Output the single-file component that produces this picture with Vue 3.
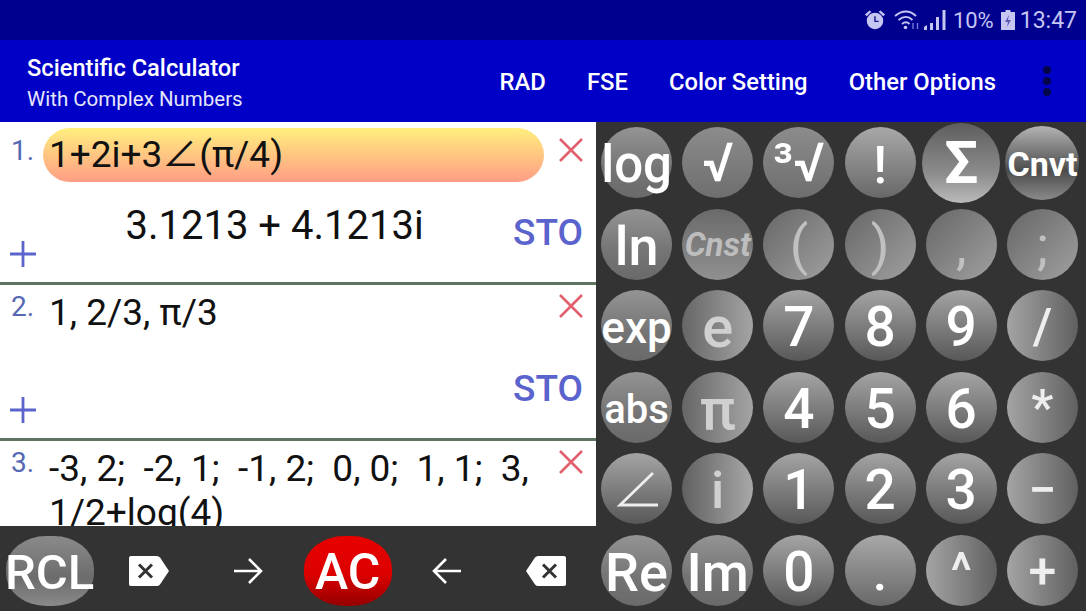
<template>
  <div class="app">
    <div class="status">
      <svg class="st-alarm" viewBox="0 0 24 24" width="22" height="22">
        <circle cx="12" cy="13" r="9" fill="#c6c6f2"/>
        <path d="M1 6l5-4.500 2 1.500-5 5zM23 6l-5-4.500-2 1.500 5 5z" fill="#c6c6f2"/>
        <path d="M12 8v5.500h4" fill="none" stroke="#1a1a90" stroke-width="1.600"/>
      </svg>
      <svg class="st-wifi" viewBox="0 0 27 20" width="27" height="20">
        <path d="M1 6c7-6 15-6 21 0M4.500 10c5-4 10-4 14 0M8 14c3-2.500 5-2.500 7.500 0" fill="none" stroke="#c6c6f2" stroke-width="1.800"/>
        <circle cx="11.500" cy="17.500" r="1.800" fill="#c6c6f2"/>
        <path d="M19 13v6M23.500 19v-6" stroke="#7f7fdc" stroke-width="1.300"/>
      </svg>
      <svg class="st-signal" viewBox="0 0 22 22" width="22" height="22">
        <path d="M0 18l3-2v5H0zM6 14h3v7H6zM12 8h3v13h-3zM18.500 1h3v20h-3z" fill="#c6c6f2"/>
      </svg>
      <span class="st-text pct">10%</span>
      <svg class="st-batt" viewBox="0 0 14 22" width="14" height="22">
        <path d="M4.500 1h5v2H14v18H0V3h4.500z" fill="#c6c6f2"/>
        <path d="M8 6l-4 7h3l-1 5 4-7H7z" fill="#5a5ab8"/>
      </svg>
      <span class="st-text">13:47</span>
    </div>
    <div class="appbar">
      <div class="titles">
        <div class="title">Scientific Calculator</div>
        <div class="subtitle">With Complex Numbers</div>
      </div>
      <div class="menu">
        <span v-for="m in menu" :key="m">{{ m }}</span>
      </div>
      <div class="dots"><i></i><i></i><i></i></div>
    </div>
    <div class="main">
      <div class="left">
        <div class="rows">
          <div v-for="(r, idx) in rows" :key="idx" :class="['row', r.size]">
            <div class="line">
              <span class="idx">{{ idx + 1 }}.</span>
              <div :class="['expr', { active: r.active }]">{{ r.expr }}</div>
              <svg class="close" viewBox="0 0 26 26" width="26" height="26">
                <path d="M2 2l22 22M24 2L2 24" stroke="#e2616f" stroke-width="2.600" fill="none"/>
              </svg>
            </div>
            <div v-if="r.size !== 'cut'" class="line2">
              <svg class="plus" viewBox="0 0 26 26" width="26" height="26">
                <path d="M0 13h26M13 0v26" stroke="#5a64cc" stroke-width="2.800" fill="none"/>
              </svg>
              <div class="result">{{ r.result }}</div>
              <span class="sto">STO</span>
            </div>
          </div>
        </div>
        <div class="bottom">
          <div class="cell"><div class="oval rcl">RCL</div></div>
          <div class="cell">
            <svg viewBox="0 0 42 32" width="42" height="32">
              <path d="M3 1h26c1 0 2 .5 3 1.500L41 16l-9 13.500c-1 1-2 1.500-3 1.500H3c-1.500 0-2-1-2-2V3c0-1 .5-2 2-2z" fill="#fff"/>
              <path d="M11 9.500l13 13M24 9.500l-13 13" stroke="#333" stroke-width="3"/>
            </svg>
          </div>
          <div class="cell">
            <svg viewBox="0 0 30 28" width="30" height="28">
              <path d="M1 14h27M16 2l12 12-12 12" fill="none" stroke="#fff" stroke-width="2.600"/>
            </svg>
          </div>
          <div class="cell"><div class="oval ac">AC</div></div>
          <div class="cell">
            <svg viewBox="0 0 30 28" width="30" height="28">
              <path d="M29 14H2M14 2L2 14l12 12" fill="none" stroke="#fff" stroke-width="2.600"/>
            </svg>
          </div>
          <div class="cell">
            <svg viewBox="0 0 42 32" width="42" height="32">
              <path d="M39 1H13c-1 0-2 .5-3 1.500L1 16l9 13.500c1 1 2 1.500 3 1.500h26c1.500 0 2-1 2-2V3c0-1-.5-2-2-2z" fill="#fff"/>
              <path d="M18 9.500l13 13M31 9.500l-13 13" stroke="#333" stroke-width="3"/>
            </svg>
          </div>
        </div>
      </div>
      <div class="keys">
        <div v-for="k in keys" :key="k.label" class="keycell">
          <div :class="['key', k.cls]">
            <svg v-if="k.label === '∠'" viewBox="0 0 42 38" width="42" height="38">
              <path d="M37 2L4 34h38" fill="none" stroke="#eee" stroke-width="2.800"/>
            </svg>
            <template v-else>{{ k.label }}</template>
          </div>
        </div>
      </div>
    </div>
  </div>
</template>

<script setup>
const menu = ['RAD', 'FSE', 'Color Setting', 'Other Options']

const rows = [
  { expr: '1+2i+3∠(π/4)', result: '3.1213 + 4.1213i', active: true, size: 'tall' },
  { expr: '1, 2/3, π/3', result: '', size: 'mid' },
  { expr: '-3, 2;  -2, 1;  -1, 2;  0, 0;  1, 1;  3, 1/2+log(4)', result: '', size: 'cut' }
]

const keys = [
  { label: 'log', cls: 'fn' },
  { label: '√', cls: 'sym' },
  { label: '³√', cls: 'sym' },
  { label: '!', cls: 'light' },
  { label: 'Σ', cls: 'sigma' },
  { label: 'Cnvt', cls: 'cnvt' },
  { label: 'ln', cls: 'fn big' },
  { label: 'Cnst', cls: 'cnst' },
  { label: '(', cls: 'dim' },
  { label: ')', cls: 'dim' },
  { label: ',', cls: 'dim' },
  { label: ';', cls: 'dim' },
  { label: 'exp', cls: 'fn mid-size' },
  { label: 'e', cls: 'dim flat' },
  { label: '7', cls: 'digit' },
  { label: '8', cls: 'digit' },
  { label: '9', cls: 'digit' },
  { label: '/', cls: 'op' },
  { label: 'abs', cls: 'fn small' },
  { label: 'π', cls: 'dim flat' },
  { label: '4', cls: 'digit' },
  { label: '5', cls: 'digit' },
  { label: '6', cls: 'digit' },
  { label: '*', cls: 'op' },
  { label: '∠', cls: 'digit' },
  { label: 'i', cls: 'dim side' },
  { label: '1', cls: 'digit' },
  { label: '2', cls: 'digit' },
  { label: '3', cls: 'digit' },
  { label: '−', cls: 'op' },
  { label: 'Re', cls: 'fn big' },
  { label: 'Im', cls: 'fn big' },
  { label: '0', cls: 'digit' },
  { label: '.', cls: 'light' },
  { label: '^', cls: 'op' },
  { label: '+', cls: 'op' }
]
</script>

<style>
html, body { margin: 0; overflow: hidden; }
</style>

<style scoped>
.app {
  width: 1086px;
  height: 611px;
  display: flex;
  flex-direction: column;
  overflow: hidden;
  font-family: Roboto, "Liberation Sans", sans-serif;
  background: #333;
}
.status {
  height: 40px;
  flex: none;
  background: #00008f;
  display: flex;
  align-items: center;
  justify-content: flex-end;
  padding: 0 9px 0 0;
  color: #c6c6f2;
  box-sizing: border-box;
}
.st-alarm { margin-right: 8px; }
.st-wifi { margin-right: 3px; }
.st-signal { margin-right: 7px; }
.st-text { font-size: 23px; }
.st-text.pct { font-size: 22px; }
.st-batt { margin: 0 5px 0 7px; }
.appbar {
  height: 82px;
  flex: none;
  background: #0000c6;
  display: flex;
  align-items: center;
  color: #fff;
  padding-left: 27px;
  box-sizing: border-box;
}
.titles { flex: 1; padding-top: 4px; }
.title { font-size: 23.700px; font-weight: 500; line-height: 32px; }
.subtitle { font-size: 20.500px; line-height: 30px; color: #e6e6fa; }
.menu { display: flex; gap: 41px; font-size: 23.800px; font-weight: 500; padding-top: 2px; }
.dots {
  width: 90px;
  padding-left: 12px;
  box-sizing: border-box;
  display: flex;
  flex-direction: column;
  align-items: center;
  gap: 3px;
}
.dots i { width: 8px; height: 8px; border-radius: 50%; background: #05054a; }
.main { flex: 1; display: flex; min-height: 0; }
.left { width: 596px; flex: none; display: flex; flex-direction: column; }
.rows { flex: 1; min-height: 0; background: #fff; overflow: hidden; }
.row {
  display: flex;
  flex-direction: column;
  border-bottom: 3px solid #5c7460;
  box-sizing: border-box;
  overflow: hidden;
}
.tall { height: 163px; }
.mid { height: 156px; }
.cut { height: 156px; border-bottom: 0; }
.line { display: flex; align-items: flex-start; padding-top: 6px; }
.idx {
  width: 43px;
  flex: none;
  box-sizing: border-box;
  padding: 5px 0 0 11px;
  font-size: 28px;
  line-height: 36px;
  color: #5468b4;
}
.mid .idx, .cut .idx { padding-top: 0; margin-top: -2px; }
.expr {
  width: 501px;
  flex: none;
  padding: 0 6px;
  font-family: Roboto, "Noto Sans CJK SC", sans-serif;
  font-size: 37px;
  line-height: 44px;
  color: #111;
  white-space: pre-wrap;
  box-sizing: border-box;
}
.expr.active {
  line-height: 54px;
  border-radius: 27px;
  background: linear-gradient(#ffef7e, #ff9d85);
}
.close { margin: 9px 0 0 14px; flex: none; }
.mid .close, .cut .close { margin-top: 2px; }
.line2 {
  display: flex;
  align-items: flex-start;
  height: 100px;
  padding: 0 13px 0 10px;
}
.plus { margin-top: 59px; flex: none; }
.result {
  flex: 1;
  text-align: center;
  font-size: 40px;
  line-height: 44px;
  padding-top: 22px;
  color: #111;
}
.sto {
  font-size: 37px;
  font-weight: 500;
  color: #5a64cc;
  line-height: 42px;
  margin-top: 30px;
}
.mid .line2 { height: 103px; padding-top: 3px; }
.bottom {
  height: 85px;
  flex: none;
  display: grid;
  grid-template-columns: repeat(6, 1fr);
  background: #333;
}
.cell { display: flex; align-items: center; justify-content: center; padding-top: 4px; }
.oval {
  width: 88px;
  height: 70px;
  padding-top: 3px;
  box-sizing: border-box;
  border-radius: 46%;
  display: flex;
  align-items: center;
  justify-content: center;
  color: #fff;
  font-weight: 500;
  white-space: nowrap;
}
.rcl { background: linear-gradient(#8a8a8a, #6c6c6c 60%, #8a8a8a); font-size: 49px; }
.ac { background: linear-gradient(#e80000, #dc0000 55%, #940000); font-size: 50px; }
.keys {
  flex: 1;
  display: grid;
  grid-template-columns: repeat(6, 1fr);
  grid-template-rows: repeat(6, 1fr);
  padding-right: 3px;
  background: #333;
}
.keycell { display: flex; align-items: center; justify-content: center; min-width: 0; }
.key {
  width: 71px;
  height: 71px;
  flex: none;
  box-sizing: border-box;
  border-radius: 50%;
  display: flex;
  align-items: center;
  justify-content: center;
  white-space: nowrap;
  color: #fff;
  font-size: 46px;
  font-weight: 500;
}
.fn { background: linear-gradient(#949494, #747474 60%, #6a6a6a); font-size: 51px; padding-top: 4px; }
.fn.mid-size { font-size: 44px; }
.fn.big { font-size: 54px; }
.fn.small { font-size: 40px; }
.sym { background: linear-gradient(#8c8c8c, #6e6e6e); font-size: 54px; }
.light { background: linear-gradient(#a8a8a8, #686868); font-size: 52px; padding-top: 5px; }
.digit { font-size: 55px; padding-top: 3px; background: linear-gradient(#a4a4a4, #585858); }
.op { background: linear-gradient(90deg, #a4a4a4, #606060); color: #eee; font-size: 50px; padding-top: 2px; }
.dim {
  background: linear-gradient(135deg, #666, #a0a0a0);
  color: #c0c0c0;
  font-size: 54px;
  font-weight: 400;
  padding-top: 3px;
}
.dim.flat { background: linear-gradient(90deg, #666, #a4a4a4); font-size: 58px; font-weight: 500; color: #d0d0d0; }
.dim.side { background: linear-gradient(90deg, #606060, #a8a8a8); font-size: 52px; font-weight: 500; color: #d0d0d0; }
.sigma {
  width: 78px;
  height: 80px;
  font-size: 60px;
  font-weight: 700;
  background: linear-gradient(#5e5e5e, #8e8e8e 65%, #bbb);
}
.cnvt {
  width: 74px;
  height: 74px;
  padding-top: 3px;
  font-size: 34px;
  font-weight: 700;
  background: linear-gradient(#b4b4b4, #4c4c4c 60%, #8a8a8a);
}
.cnst {
  font-size: 33px;
  font-weight: 700;
  font-style: italic;
  color: #bdbdbd;
  background: linear-gradient(#6a6a6a, #909090);
}
</style>
